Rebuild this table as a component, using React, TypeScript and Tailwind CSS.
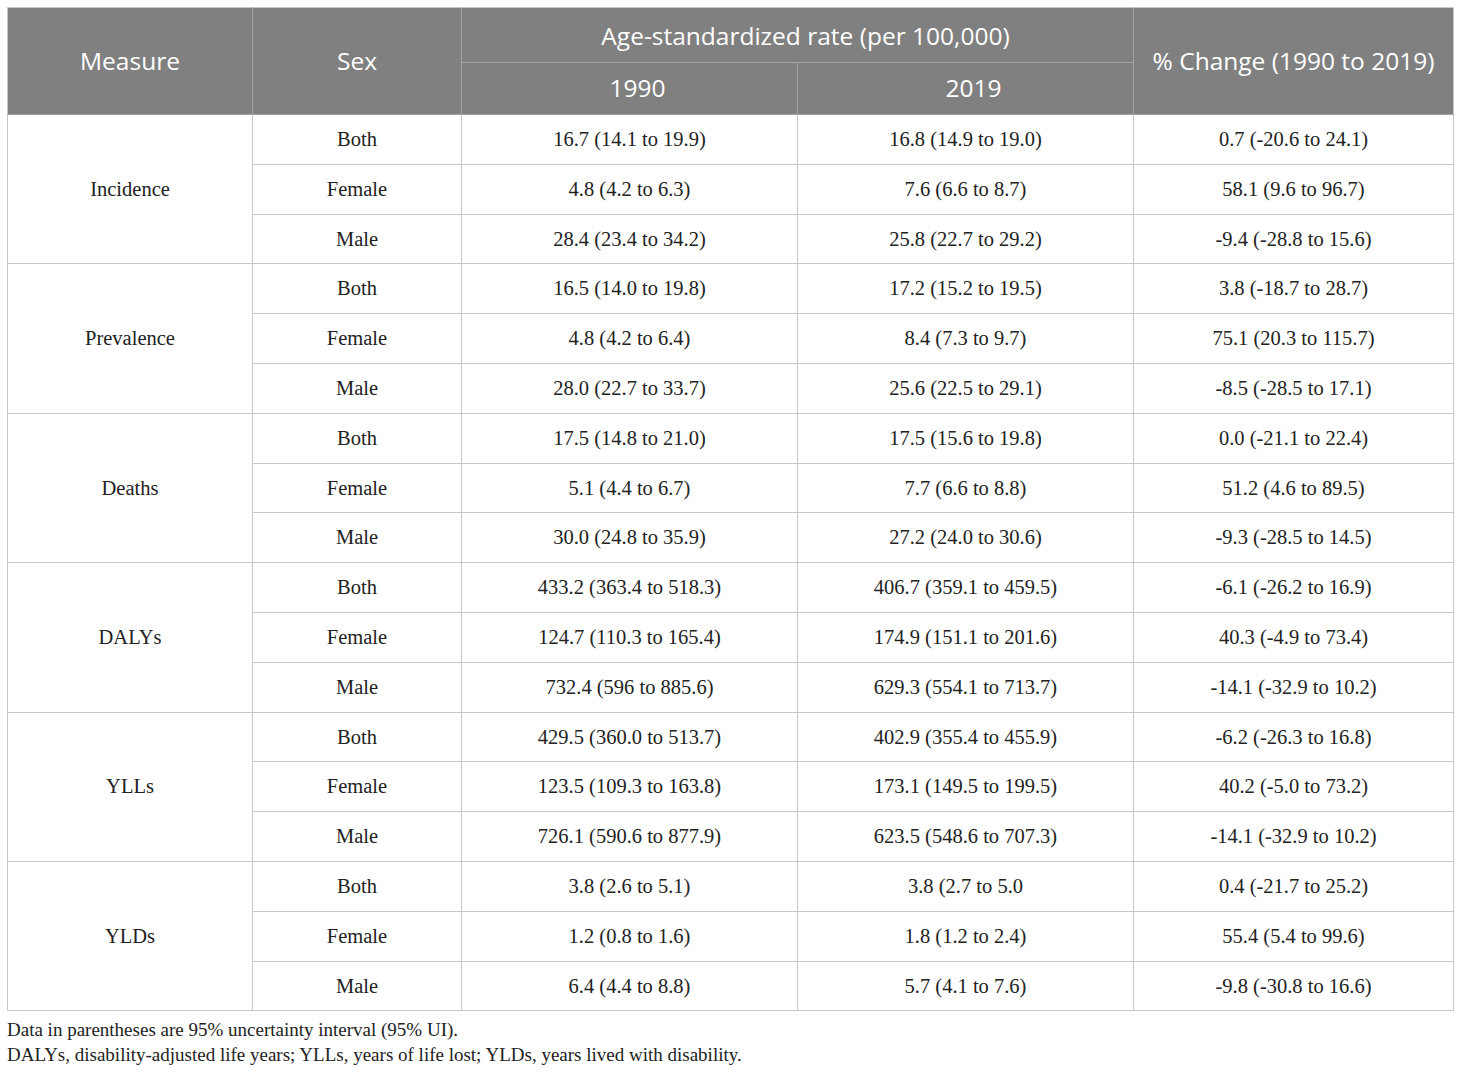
const rows = [
  {
    measure: 'Incidence',
    data: [
      ['Both', '16.7 (14.1 to 19.9)', '16.8 (14.9 to 19.0)', '0.7 (-20.6 to 24.1)'],
      ['Female', '4.8 (4.2 to 6.3)', '7.6 (6.6 to 8.7)', '58.1 (9.6 to 96.7)'],
      ['Male', '28.4 (23.4 to 34.2)', '25.8 (22.7 to 29.2)', '-9.4 (-28.8 to 15.6)'],
    ],
  },
  {
    measure: 'Prevalence',
    data: [
      ['Both', '16.5 (14.0 to 19.8)', '17.2 (15.2 to 19.5)', '3.8 (-18.7 to 28.7)'],
      ['Female', '4.8 (4.2 to 6.4)', '8.4 (7.3 to 9.7)', '75.1 (20.3 to 115.7)'],
      ['Male', '28.0 (22.7 to 33.7)', '25.6 (22.5 to 29.1)', '-8.5 (-28.5 to 17.1)'],
    ],
  },
  {
    measure: 'Deaths',
    data: [
      ['Both', '17.5 (14.8 to 21.0)', '17.5 (15.6 to 19.8)', '0.0 (-21.1 to 22.4)'],
      ['Female', '5.1 (4.4 to 6.7)', '7.7 (6.6 to 8.8)', '51.2 (4.6 to 89.5)'],
      ['Male', '30.0 (24.8 to 35.9)', '27.2 (24.0 to 30.6)', '-9.3 (-28.5 to 14.5)'],
    ],
  },
  {
    measure: 'DALYs',
    data: [
      ['Both', '433.2 (363.4 to 518.3)', '406.7 (359.1 to 459.5)', '-6.1 (-26.2 to 16.9)'],
      ['Female', '124.7 (110.3 to 165.4)', '174.9 (151.1 to 201.6)', '40.3 (-4.9 to 73.4)'],
      ['Male', '732.4 (596 to 885.6)', '629.3 (554.1 to 713.7)', '-14.1 (-32.9 to 10.2)'],
    ],
  },
  {
    measure: 'YLLs',
    data: [
      ['Both', '429.5 (360.0 to 513.7)', '402.9 (355.4 to 455.9)', '-6.2 (-26.3 to 16.8)'],
      ['Female', '123.5 (109.3 to 163.8)', '173.1 (149.5 to 199.5)', '40.2 (-5.0 to 73.2)'],
      ['Male', '726.1 (590.6 to 877.9)', '623.5 (548.6 to 707.3)', '-14.1 (-32.9 to 10.2)'],
    ],
  },
  {
    measure: 'YLDs',
    data: [
      ['Both', '3.8 (2.6 to 5.1)', '3.8 (2.7 to 5.0', '0.4 (-21.7 to 25.2)'],
      ['Female', '1.2 (0.8 to 1.6)', '1.8 (1.2 to 2.4)', '55.4 (5.4 to 99.6)'],
      ['Male', '6.4 (4.4 to 8.8)', '5.7 (4.1 to 7.6)', '-9.8 (-30.8 to 16.6)'],
    ],
  },
];

export default function App() {
  return (
    <div className="w-[1460px] h-[1073px] bg-white pt-[7px] pl-[7px]">
      <table className="border-collapse table-fixed w-[1446px] border border-[#c8c8c8]">
        <colgroup>
          <col className="w-[245px]" />
          <col className="w-[209px]" />
          <col className="w-[336px]" />
          <col className="w-[336px]" />
          <col className="w-[320px]" />
        </colgroup>
        <thead className="bg-[#808080] text-white font-['Open_Sans',sans-serif] text-[24.5px]">
          <tr className="h-[55px]">
            <th rowSpan={2} className="font-normal border border-[#a3a3a3] border-t-[#c8c8c8] border-l-[#c8c8c8]">Measure</th>
            <th rowSpan={2} className="font-normal border border-[#a3a3a3] border-t-[#c8c8c8]">Sex</th>
            <th colSpan={2} className="font-normal border border-[#a3a3a3] border-t-[#c8c8c8] pl-[16px] pt-[2px]">
              Age-standardized rate (per 100,000)
            </th>
            <th rowSpan={2} className="font-normal border border-[#a3a3a3] border-t-[#c8c8c8] border-r-[#c8c8c8]">
              % Change (1990 to 2019)
            </th>
          </tr>
          <tr className="h-[52px]">
            <th className="font-normal border border-[#a3a3a3] pl-[16px]">1990</th>
            <th className="font-normal border border-[#a3a3a3] pl-[16px]">2019</th>
          </tr>
        </thead>
        <tbody className="font-['Liberation_Serif',serif] text-[20.5px] text-[#222]">
          {rows.map((g) =>
            g.data.map((r, i) => (
              <tr key={g.measure + r[0]} className="h-[49.8px]">
                {i === 0 && (
                  <td rowSpan={3} className="text-center border border-[#c8c8c8]">
                    {g.measure}
                  </td>
                )}
                {r.map((c, j) => (
                  <td key={j} className="text-center border border-[#c8c8c8] p-0">
                    {c}
                  </td>
                ))}
              </tr>
            ))
          )}
        </tbody>
      </table>
      <div className="font-['Liberation_Serif',serif] text-[19px] text-[#222] leading-[25px] mt-[6px]">
        <p>Data in parentheses are 95% uncertainty interval (95% UI).</p>
        <p>DALYs, disability-adjusted life years; YLLs, years of life lost; YLDs, years lived with disability.</p>
      </div>
    </div>
  );
}
